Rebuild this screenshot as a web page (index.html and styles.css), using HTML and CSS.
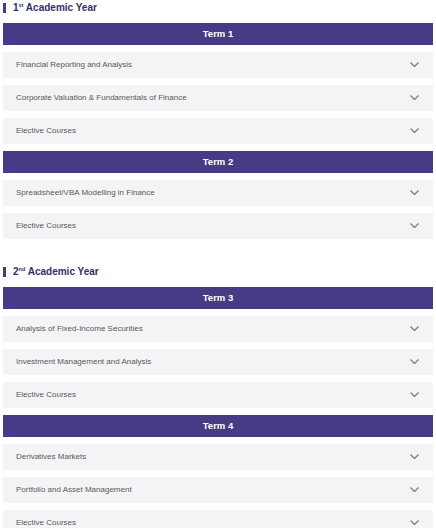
FILE: index.html
```html
<!DOCTYPE html>
<html>
<head>
<meta charset="utf-8">
<link rel="stylesheet" href="styles.css">
</head>
<body>
<div class="page">
  <section class="year">
    <h2 class="year-title"><span class="mark"></span><span>1<sup>st</sup> Academic Year</span></h2>
    <div class="list">
      <div class="term">Term 1</div>
      <div class="item"><span>Financial Reporting and Analysis</span><svg class="chev" viewBox="0 0 9 5"><path d="M0.5 0.5 L4.5 4.5 L8.5 0.5"/></svg></div>
      <div class="item"><span>Corporate Valuation &amp; Fundamentals of Finance</span><svg class="chev" viewBox="0 0 9 5"><path d="M0.5 0.5 L4.5 4.5 L8.5 0.5"/></svg></div>
      <div class="item"><span>Elective Courses</span><svg class="chev" viewBox="0 0 9 5"><path d="M0.5 0.5 L4.5 4.5 L8.5 0.5"/></svg></div>
      <div class="term">Term 2</div>
      <div class="item"><span>Spreadsheet/VBA Modelling in Finance</span><svg class="chev" viewBox="0 0 9 5"><path d="M0.5 0.5 L4.5 4.5 L8.5 0.5"/></svg></div>
      <div class="item"><span>Elective Courses</span><svg class="chev" viewBox="0 0 9 5"><path d="M0.5 0.5 L4.5 4.5 L8.5 0.5"/></svg></div>
    </div>
  </section>
  <section class="year">
    <h2 class="year-title"><span class="mark"></span><span>2<sup>nd</sup> Academic Year</span></h2>
    <div class="list">
      <div class="term">Term 3</div>
      <div class="item"><span>Analysis of Fixed-Income Securities</span><svg class="chev" viewBox="0 0 9 5"><path d="M0.5 0.5 L4.5 4.5 L8.5 0.5"/></svg></div>
      <div class="item"><span>Investment Management and Analysis</span><svg class="chev" viewBox="0 0 9 5"><path d="M0.5 0.5 L4.5 4.5 L8.5 0.5"/></svg></div>
      <div class="item"><span>Elective Courses</span><svg class="chev" viewBox="0 0 9 5"><path d="M0.5 0.5 L4.5 4.5 L8.5 0.5"/></svg></div>
      <div class="term">Term 4</div>
      <div class="item"><span>Derivatives Markets</span><svg class="chev" viewBox="0 0 9 5"><path d="M0.5 0.5 L4.5 4.5 L8.5 0.5"/></svg></div>
      <div class="item"><span>Portfolio and Asset Management</span><svg class="chev" viewBox="0 0 9 5"><path d="M0.5 0.5 L4.5 4.5 L8.5 0.5"/></svg></div>
      <div class="item"><span>Elective Courses</span><svg class="chev" viewBox="0 0 9 5"><path d="M0.5 0.5 L4.5 4.5 L8.5 0.5"/></svg></div>
    </div>
  </section>
</div>
</body>
</html>
```
FILE: styles.css
```css
html, body {
  margin: 0;
  padding: 0;
  background: #ffffff;
}
body {
  font-family: "Liberation Sans", Arial, Helvetica, sans-serif;
}
.page {
  padding: 3px 3px 0 3px;
  display: flex;
  flex-direction: column;
  gap: 28px;
}
.year-title {
  margin: 0 0 10px 0;
  display: flex;
  align-items: center;
  gap: 7px;
  height: 10px;
  font-size: 10px;
  font-weight: bold;
  color: #2f2f6b;
  line-height: 10px;
}
.mark {
  display: block;
  width: 3px;
  height: 10px;
  background: #453c85;
}
.year-title sup {
  font-size: 5.5px;
  line-height: 0;
  vertical-align: 4px;
}
.list {
  display: flex;
  flex-direction: column;
  gap: 7px;
}
.term {
  box-sizing: border-box;
  height: 22px;
  background: #453c85;
  color: #ffffff;
  font-size: 9.5px;
  font-weight: bold;
  display: flex;
  align-items: center;
  justify-content: center;
  padding-bottom: 1px;
}
.item {
  box-sizing: border-box;
  height: 26px;
  background: #f4f4f6;
  display: flex;
  align-items: center;
  justify-content: space-between;
  padding: 0 14px 2px 13px;
  font-size: 8px;
  color: #585858;
}
.chev {
  width: 9px;
  height: 5px;
  fill: none;
  stroke: #7c7c7c;
  stroke-width: 1.3;
}
```
